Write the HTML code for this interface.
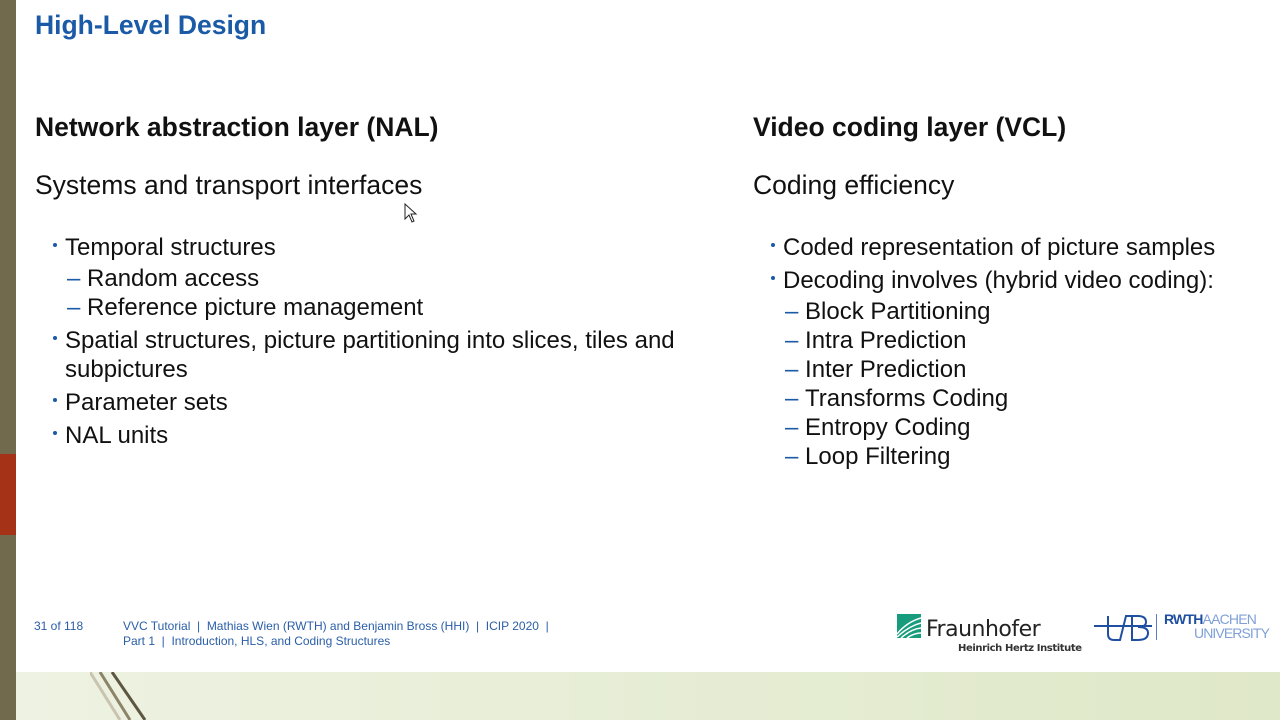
<!DOCTYPE html>
<html><head><meta charset="utf-8"><style>
*{margin:0;padding:0;box-sizing:border-box}
body{width:1280px;height:720px;position:relative;overflow:hidden;background:#fff;font-family:"Liberation Sans",Arial,sans-serif;color:#111}
.bar{position:absolute;left:0;top:0;width:16px;height:720px;background:#716a4d}
.red{position:absolute;left:0;top:454px;width:16px;height:81px;background:#a53216}
.bottom{position:absolute;left:16px;top:672px;width:1264px;height:48px;background:linear-gradient(90deg,#eef2e2,#dfe8c8)}
.t{position:absolute;white-space:nowrap}
.title{left:35px;top:10px;font-size:26.5px;font-weight:bold;color:#1a5aa6}
.h{font-size:26.5px;font-weight:bold;top:112px}
.s{font-size:26.5px;top:170px}
.b{font-size:24px}
.dot{position:absolute;width:4px;height:4px;border-radius:2px;background:#1a5aa6}
.dash{color:#1a5aa6}
.foot{font-size:12px;color:#2a5ea8;line-height:15px}
</style></head><body>
<div class="bar"></div><div class="red"></div><div class="bottom"></div>
<svg style="position:absolute;left:90px;top:672px" width="80" height="48"><path d="M0 0 L30 48" stroke="#c8c4b0" stroke-width="3"/><path d="M10 0 L40 48" stroke="#8b8468" stroke-width="3"/><path d="M22 0 L55 48" stroke="#5d5640" stroke-width="3"/></svg>
<div class="t title">High-Level Design</div>
<div class="t h" style="left:35px">Network abstraction layer (NAL)</div>
<div class="t h" style="left:753px">Video coding layer (VCL)</div>
<div class="t s" style="left:35px">Systems and transport interfaces</div>
<div class="t s" style="left:753px">Coding efficiency</div>

<div class="dot" style="left:53px;top:243px"></div><div class="t b" style="left:65px;top:234px">Temporal structures</div>
<div class="t b" style="left:67px;top:265px"><span class="dash">–</span>&nbsp;Random access</div>
<div class="t b" style="left:67px;top:294px"><span class="dash">–</span>&nbsp;Reference picture management</div>
<div class="dot" style="left:53px;top:336px"></div><div class="t b" style="left:65px;top:327px">Spatial structures, picture partitioning into slices, tiles and</div>
<div class="t b" style="left:65px;top:356px">subpictures</div>
<div class="dot" style="left:53px;top:398px"></div><div class="t b" style="left:65px;top:389px">Parameter sets</div>
<div class="dot" style="left:53px;top:431px"></div><div class="t b" style="left:65px;top:422px">NAL units</div>

<div class="dot" style="left:771px;top:243px"></div><div class="t b" style="left:783px;top:234px">Coded representation of picture samples</div>
<div class="dot" style="left:771px;top:276px"></div><div class="t b" style="left:783px;top:267px">Decoding involves (hybrid video coding):</div>
<div class="t b" style="left:785px;top:298px"><span class="dash">–</span>&nbsp;Block Partitioning</div>
<div class="t b" style="left:785px;top:327px"><span class="dash">–</span>&nbsp;Intra Prediction</div>
<div class="t b" style="left:785px;top:356px"><span class="dash">–</span>&nbsp;Inter Prediction</div>
<div class="t b" style="left:785px;top:385px"><span class="dash">–</span>&nbsp;Transforms Coding</div>
<div class="t b" style="left:785px;top:414px"><span class="dash">–</span>&nbsp;Entropy Coding</div>
<div class="t b" style="left:785px;top:443px"><span class="dash">–</span>&nbsp;Loop Filtering</div>

<div class="t foot" style="left:34px;top:619px">31 of 118</div>
<div class="t foot" style="left:123px;top:619px">VVC Tutorial &nbsp;|&nbsp; Mathias Wien (RWTH) and Benjamin Bross (HHI) &nbsp;|&nbsp; ICIP 2020 &nbsp;|<br>Part 1 &nbsp;|&nbsp; Introduction, HLS, and Coding Structures</div>

<svg style="position:absolute;left:897px;top:614px" width="24" height="24"><rect width="24" height="24" fill="#179c7d"/><path d="M0 20 Q10 8 24 4 M0 23 Q12 12 24 9 M4 24 Q14 15 24 14 M10 24 Q17 19 24 19" stroke="#fff" stroke-width="1.5" fill="none"/></svg>
<div class="t" style="left:926px;top:617px;font-size:22px;color:#222;font-family:'DejaVu Sans',sans-serif;letter-spacing:-0.5px">Fraunhofer</div>
<div class="t" style="left:958px;top:643px;font-size:10px;font-weight:bold;color:#333;font-family:'DejaVu Sans',sans-serif;letter-spacing:-0.4px">Heinrich Hertz Institute</div>
<svg style="position:absolute;left:1092px;top:612px" width="60" height="30"><path d="M2 14 H60 M16 4 V22 Q16 28 22 28 H28 L34 4 H46 Q54 4 54 10 Q54 15 46 15 Q56 15 56 21 Q56 28 46 28 H40 V4" stroke="#1f4fa0" stroke-width="2" fill="none"/></svg>
<div style="position:absolute;left:1156px;top:614px;width:1px;height:26px;background:#5a7ec0"></div>
<div class="t" style="left:1164px;top:612px;font-size:14px;font-weight:bold;color:#1f4fa0;letter-spacing:-0.8px;line-height:14px">RWTH<span style="font-weight:normal;color:#7fa0d8">AACHEN</span></div>
<div class="t" style="left:1194px;top:626px;font-size:14px;color:#7fa0d8;letter-spacing:-0.9px;line-height:14px">UNIVERSITY</div>
<svg style="position:absolute;left:404px;top:203px" width="14" height="20"><path d="M1 1 V16 L5 12 L8 19 L10 18 L7 11 H12 Z" fill="#fff" stroke="#222" stroke-width="1"/></svg>
</body></html>
